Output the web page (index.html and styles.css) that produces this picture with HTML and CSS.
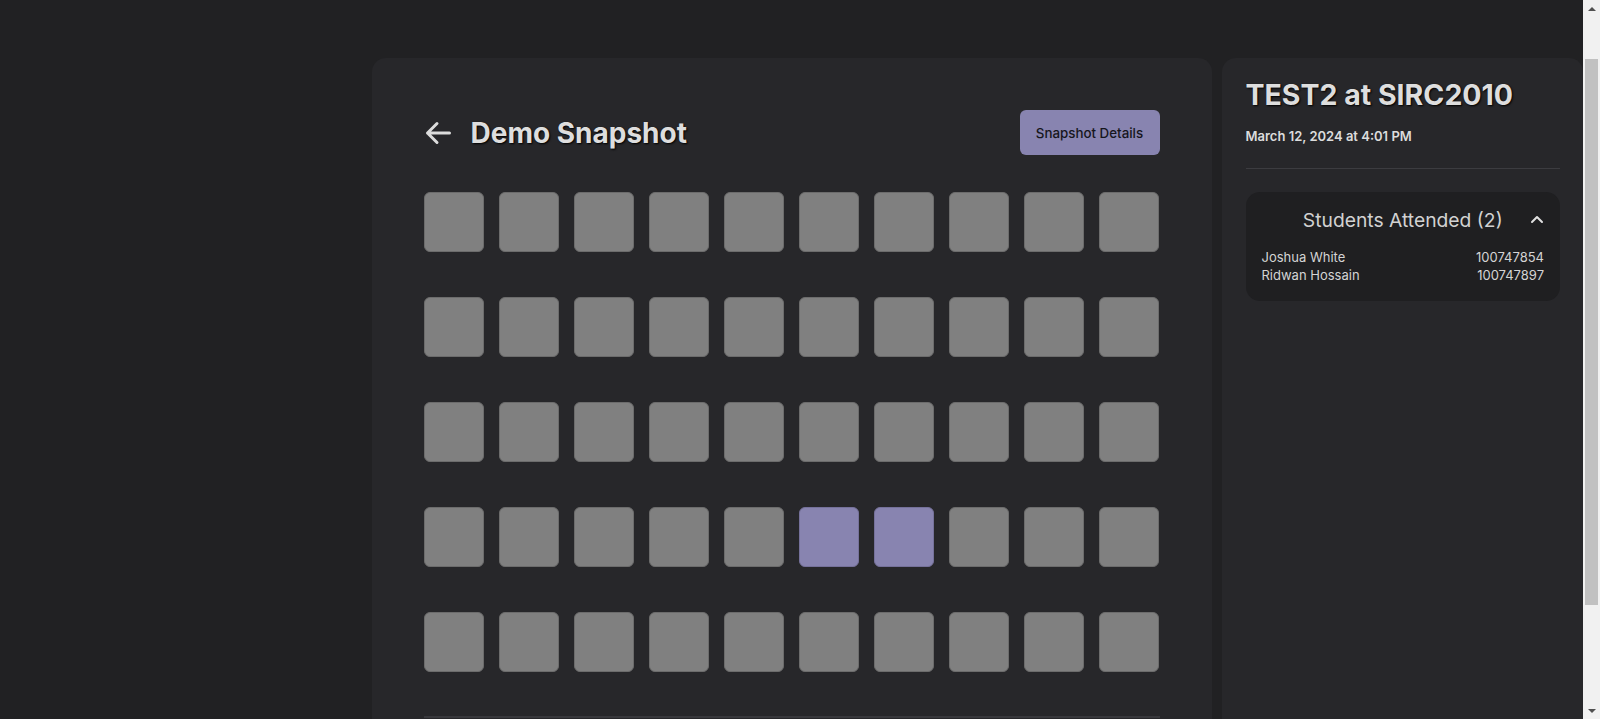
FILE: index.html
```html
<!DOCTYPE html>
<html lang="en">
<head>
<meta charset="utf-8">
<title>Demo Snapshot</title>
<link rel="stylesheet" href="styles.css">
</head>
<body>
<div class="page">
  <div class="gutter"></div>
  <main class="main-card">
    <header class="main-head">
      <div class="title-wrap">
        <button class="back" aria-label="Back">
          <svg width="26" height="24" viewBox="0 0 26 24" fill="none" stroke="currentColor" stroke-width="3" stroke-linecap="round" stroke-linejoin="round"><path d="M24.5 12H2.5M12 2.5L2.5 12L12 21.5"/></svg>
        </button>
        <h1 class="title">Demo Snapshot</h1>
      </div>
      <button class="details-btn">Snapshot Details</button>
    </header>
    <div class="seats">
      <div class="seat"></div><div class="seat"></div><div class="seat"></div><div class="seat"></div><div class="seat"></div><div class="seat"></div><div class="seat"></div><div class="seat"></div><div class="seat"></div><div class="seat"></div>
      <div class="seat"></div><div class="seat"></div><div class="seat"></div><div class="seat"></div><div class="seat"></div><div class="seat"></div><div class="seat"></div><div class="seat"></div><div class="seat"></div><div class="seat"></div>
      <div class="seat"></div><div class="seat"></div><div class="seat"></div><div class="seat"></div><div class="seat"></div><div class="seat"></div><div class="seat"></div><div class="seat"></div><div class="seat"></div><div class="seat"></div>
      <div class="seat"></div><div class="seat"></div><div class="seat"></div><div class="seat"></div><div class="seat"></div><div class="seat taken"></div><div class="seat taken"></div><div class="seat"></div><div class="seat"></div><div class="seat"></div>
      <div class="seat"></div><div class="seat"></div><div class="seat"></div><div class="seat"></div><div class="seat"></div><div class="seat"></div><div class="seat"></div><div class="seat"></div><div class="seat"></div><div class="seat"></div>
    </div>
    <div class="main-foot"></div>
  </main>
  <aside class="side">
    <div class="panel">
      <h2 class="panel-title">TEST2 at SIRC2010</h2>
      <p class="date">March 12, 2024 at 4:01 PM</p>
      <hr class="divider">
      <section class="attended">
        <div class="att-head">
          <span class="att-title">Students Attended (2)</span>
          <svg class="chev" width="14" height="10" viewBox="0 0 14 10" fill="none" stroke="currentColor" stroke-width="2" stroke-linecap="round" stroke-linejoin="round"><path d="M2 8L7 3L12 8"/></svg>
        </div>
        <ul class="att-list">
          <li class="att-row"><span>Joshua White</span><span>100747854</span></li>
          <li class="att-row"><span>Ridwan Hossain</span><span>100747897</span></li>
        </ul>
      </section>
    </div>
  </aside>
</div>
<div class="scrollbar" aria-hidden="true">
  <span class="sb-arrow sb-up"></span>
  <div class="sb-track"><div class="sb-thumb"></div></div>
  <span class="sb-arrow sb-down"></span>
</div>
</body>
</html>
```

FILE: styles.css
```css
* { box-sizing: border-box; }

html, body {
  margin: 0;
  padding: 0;
  background: #212123;
  font-family: Inter, "Noto Sans", "Liberation Sans", sans-serif;
  color: #d8d8d8;
}

body {
  overflow: hidden;
}

.page {
  display: grid;
  grid-template-columns: 1fr 840px 1fr;
  width: calc(100% - 17px);
  padding-top: 58px;
  height: 850px;
}

.main-card {
  background: #27272a;
  border-radius: 14px 14px 0 0;
  padding: 52px 52px 0;
}

.main-head {
  display: flex;
  align-items: center;
  justify-content: space-between;
  height: 45px;
}

.title-wrap {
  display: flex;
  align-items: center;
  gap: 20px;
}

.back {
  display: flex;
  padding: 0 0 0 1px;
  border: 0;
  background: none;
  color: #dcdcdc;
  cursor: pointer;
}

.title {
  margin: 0;
  font-size: 28px;
  line-height: 34px;
  font-weight: 700;
  color: #dedede;
  text-shadow: 1px 1px 2px #000;
}

.details-btn {
  width: 140px;
  height: 45px;
  border: 0;
  border-radius: 6px;
  background: #8884b0;
  color: #16161c;
  font-family: inherit;
  font-size: 13.333px;
  font-weight: 500;
}

.seats {
  margin-top: 37px;
  display: grid;
  grid-template-columns: repeat(10, 60px);
  column-gap: 15px;
  row-gap: 45px;
}

.seat {
  height: 60px;
  border-radius: 6px;
  background: #808080;
  border: 1px solid #6c6c6c;
}

.seat.taken {
  background: #8884b0;
  border-color: #75719a;
}

.main-foot {
  margin-top: 44px;
  border-top: 2px solid #38383c;
}

.side {
  padding: 0 0 0 10px;
}

.panel {
  height: 100%;
  background: #27272a;
  border-radius: 14px 14px 0 0;
  padding: 19px 23px 0 24px;
}

.panel-title {
  margin: 0;
  font-size: 28.5px;
  line-height: 36px;
  font-weight: 700;
  color: #dedede;
  text-shadow: 1px 1px 2px #000;
}

.date {
  margin: 13px 0 0;
  font-size: 13px;
  line-height: 20px;
  font-weight: 600;
  color: #dcdcdc;
}

.divider {
  margin: 22px 0 0;
  border: 0;
  height: 1px;
  background: #3c3c40;
}

.attended {
  margin-top: 23px;
  background: #1f1f21;
  border-radius: 14px;
  padding: 14px 16px 17px;
}

.att-head {
  position: relative;
  display: flex;
  justify-content: center;
  align-items: center;
  height: 28px;
}

.att-title {
  font-size: 19.3px;
  line-height: 28px;
  font-weight: 400;
  color: #d2d2d2;
}

.chev {
  position: absolute;
  right: 0;
  top: 8px;
  color: #e0e0e0;
}

.att-list {
  list-style: none;
  margin: 14px 0 0;
  padding: 0;
}

.att-row {
  display: flex;
  justify-content: space-between;
  font-size: 13px;
  line-height: 18px;
  color: #d4d4d4;
}

/* browser scrollbar as seen in the capture */
.scrollbar {
  position: fixed;
  top: 0;
  right: 0;
  width: 17px;
  height: 100vh;
  background: #f1f1f1;
  display: flex;
  flex-direction: column;
}

.sb-arrow {
  height: 17px;
  display: flex;
  align-items: center;
  justify-content: center;
}

.sb-arrow::before {
  content: "";
  width: 0;
  height: 0;
  border-left: 4px solid transparent;
  border-right: 4px solid transparent;
}

.sb-up::before {
  border-bottom: 4px solid #505050;
}

.sb-down::before {
  border-top: 4px solid #505050;
}

.sb-track {
  flex: 1;
  padding: 42px 2px 0;
}

.sb-thumb {
  height: 546px;
  background: #c1c1c1;
}
```
